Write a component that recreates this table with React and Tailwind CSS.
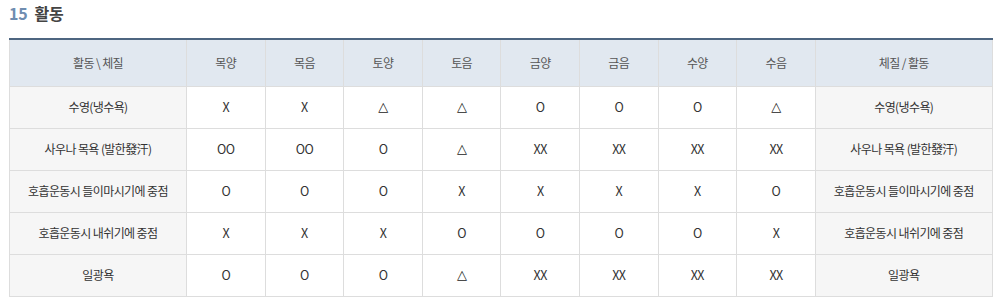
import React from "react";

const headers = ["목양", "목음", "토양", "토음", "금양", "금음", "수양", "수음"];

const rows = [
    { name: "수영(냉수욕)", values: ["X", "X", "△", "△", "O", "O", "O", "△"] },
    { name: "사우나 목욕 (발한發汗)", values: ["OO", "OO", "O", "△", "XX", "XX", "XX", "XX"] },
    { name: "호흡운동시 들이마시기에 중점", values: ["O", "O", "O", "X", "X", "X", "X", "O"] },
    { name: "호흡운동시 내쉬기에 중점", values: ["X", "X", "X", "O", "O", "O", "O", "X"] },
    { name: "일광욕", values: ["O", "O", "O", "△", "XX", "XX", "XX", "XX"] },
];

const Mark = ({ value }) => {
    if (value === "△") {
        return (
            <span className="text-[13px] text-[#222]" style={{ fontFamily: '"DejaVu Sans", sans-serif' }}>
                {value}
            </span>
        );
    }
    return <span className="text-[12.5px] text-[#333]">{value}</span>;
};

const App = () => {
    return (
        <div
            className="w-[1000px] h-[305px] bg-white pt-[3px] pl-[9px] pr-[8px]"
            style={{ fontFamily: '"Noto Sans CJK KR", "Noto Sans", sans-serif' }}
        >
            {/* Title */}
            <h3 className="text-[16px] font-bold leading-[20px] text-[#444] tracking-[-0.2px]">
                <span className="text-[#6f8db0] mr-[7px]">15</span>활동
            </h3>

            {/* Table */}
            <table className="mt-[15px] w-[983px] border-collapse table-fixed text-[12px] text-[#333] tracking-[-0.6px]">
                <colgroup>
                    <col className="w-[177px]" />
                    {headers.map((h) => (
                        <col key={h} className="w-[78.6px]" />
                    ))}
                    <col className="w-[177px]" />
                </colgroup>
                <thead>
                    <tr className="bg-[#e1e8f0] border-t-2 border-t-[#4d6580] h-[47px]">
                        <th className="font-normal text-[#555] border-x border-[#dddddd]">활동 \ 체질</th>
                        {headers.map((h) => (
                            <th key={h} className="font-normal text-[#555] border-x border-[#dddddd]">
                                {h}
                            </th>
                        ))}
                        <th className="font-normal text-[#555] border-x border-[#dddddd]">체질 / 활동</th>
                    </tr>
                </thead>
                <tbody>
                    {rows.map((row) => (
                        <tr key={row.name} className="h-[42px]">
                            <td className="bg-[#f6f6f6] text-center border border-[#dddddd]">{row.name}</td>
                            {row.values.map((v, i) => (
                                <td key={i} className="text-center border border-[#dddddd]">
                                    <Mark value={v} />
                                </td>
                            ))}
                            <td className="bg-[#f6f6f6] text-center border border-[#dddddd]">{row.name}</td>
                        </tr>
                    ))}
                </tbody>
            </table>
        </div>
    );
};

export default App;
